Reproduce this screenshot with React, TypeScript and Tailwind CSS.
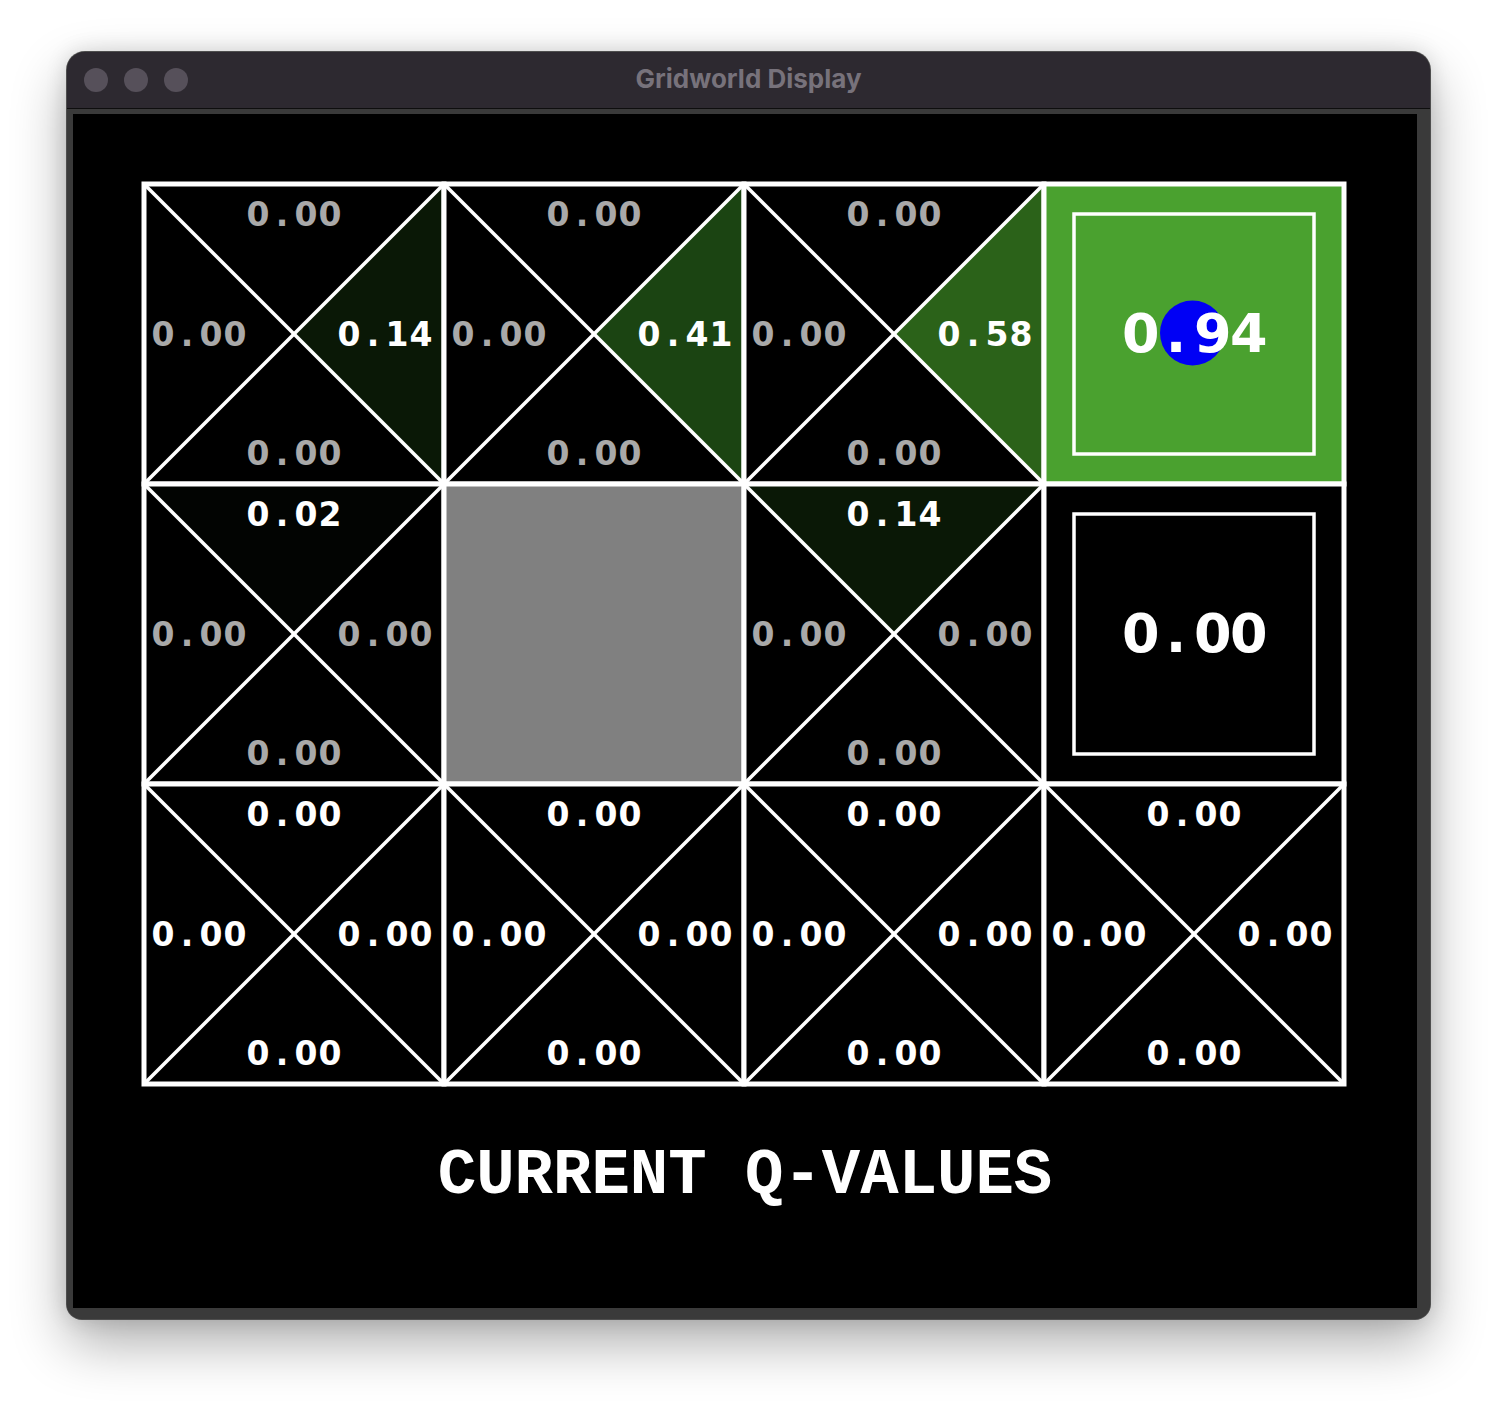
import React from "react";

type Dir = "n" | "e" | "s" | "w";

type QCell = {
  kind: "q";
  vals: Record<Dir, string>;
  fills: Partial<Record<Dir, string>>;
  best: Dir[];
};
type TermCell = { kind: "term"; val: string; bg: string; agent?: boolean };
type WallCell = { kind: "wall" };
type Cell = QCell | TermCell | WallCell;

const zero = { n: "0.00", e: "0.00", s: "0.00", w: "0.00" };

const cells: Cell[] = [
  { kind: "q", vals: { ...zero, e: "0.14" }, fills: { e: "#0a1806" }, best: ["e"] },
  { kind: "q", vals: { ...zero, e: "0.41" }, fills: { e: "#1b4412" }, best: ["e"] },
  { kind: "q", vals: { ...zero, e: "0.58" }, fills: { e: "#2b6219" }, best: ["e"] },
  { kind: "term", val: "0.94", bg: "#4aa12f", agent: true },
  { kind: "q", vals: { ...zero, n: "0.02" }, fills: { n: "#020402" }, best: ["n"] },
  { kind: "wall" },
  { kind: "q", vals: { ...zero, n: "0.14" }, fills: { n: "#0a1806" }, best: ["n"] },
  { kind: "term", val: "0.00", bg: "#000000" },
  { kind: "q", vals: zero, fills: {}, best: ["n", "e", "s", "w"] },
  { kind: "q", vals: zero, fills: {}, best: ["n", "e", "s", "w"] },
  { kind: "q", vals: zero, fills: {}, best: ["n", "e", "s", "w"] },
  { kind: "q", vals: zero, fills: {}, best: ["n", "e", "s", "w"] },
];

const tri: Record<Dir, string> = {
  n: "0,0 300,0 150,150",
  e: "300,0 300,300 150,150",
  s: "0,300 300,300 150,150",
  w: "0,0 0,300 150,150",
};

/* Fixed-pitch number: every character sits in a cell of equal width */
function Fixed({ text, cell, className }: { text: string; cell: string; className: string }) {
  return (
    <span className={`inline-flex ${className}`}>
      {text.split("").map((ch, i) => (
        <span key={i} className={`inline-block text-center ${cell}`}>
          {ch}
        </span>
      ))}
    </span>
  );
}

function Label({ text, white }: { text: string; white: boolean }) {
  return (
    <Fixed
      text={text}
      cell="w-[24px]"
      className={`font-['DejaVu_Sans',sans-serif] text-[33px] font-bold leading-none ${
        white ? "text-white" : "text-[#a9a9a9]"
      }`}
    />
  );
}

function CellView({ cell }: { cell: Cell }) {
  if (cell.kind === "wall") {
    return (
      <div className="relative h-[300px] w-[300px]">
        <svg className="absolute inset-0 overflow-visible" width="300" height="300" viewBox="0 0 300 300">
          <rect x="0" y="0" width="300" height="300" fill="#808080" />
          <rect x="0" y="0" width="300" height="300" fill="none" stroke="#ffffff" strokeWidth="5" />
        </svg>
      </div>
    );
  }
  if (cell.kind === "term") {
    return (
      <div className="relative h-[300px] w-[300px]">
        <svg className="absolute inset-0 overflow-visible" width="300" height="300" viewBox="0 0 300 300">
          <rect x="0" y="0" width="300" height="300" fill={cell.bg} />
          <rect x="30" y="30" width="240" height="240" fill="none" stroke="#ffffff" strokeWidth="3.5" />
          {cell.agent && <circle cx="148.5" cy="149" r="32.5" fill="#0000f5" />}
          <rect x="0" y="0" width="300" height="300" fill="none" stroke="#ffffff" strokeWidth="5" />
        </svg>
        <div className="relative flex h-full items-center justify-center">
          <Fixed
            text={cell.val}
            cell="w-[36px]"
            className="font-['DejaVu_Sans',sans-serif] text-[54px] font-bold leading-none text-white"
          />
        </div>
      </div>
    );
  }
  const isBest = (d: Dir) => cell.best.includes(d);
  return (
    <div className="relative h-[300px] w-[300px]">
      <svg className="absolute inset-0 overflow-visible" width="300" height="300" viewBox="0 0 300 300">
        <rect x="0" y="0" width="300" height="300" fill="#000000" />
        {(Object.keys(cell.fills) as Dir[]).map((d) => (
          <polygon key={d} points={tri[d]} fill={cell.fills[d]} />
        ))}
        <line x1="0" y1="0" x2="300" y2="300" stroke="#ffffff" strokeWidth="3.5" />
        <line x1="300" y1="0" x2="0" y2="300" stroke="#ffffff" strokeWidth="3.5" />
        <rect x="0" y="0" width="300" height="300" fill="none" stroke="#ffffff" strokeWidth="5" />
      </svg>
      <div className="relative flex h-full flex-col items-center justify-between pb-[14px] pt-[14px]">
        <Label text={cell.vals.n} white={isBest("n")} />
        <div className="flex w-full justify-between pl-[7px] pr-[11px]">
          <Label text={cell.vals.w} white={isBest("w")} />
          <Label text={cell.vals.e} white={isBest("e")} />
        </div>
        <Label text={cell.vals.s} white={isBest("s")} />
      </div>
    </div>
  );
}

export default function App() {
  return (
    <div className="min-h-[1404px] w-full bg-white pl-[67px] pt-[52px]">
      <div className="flex w-[1363px] flex-col overflow-hidden rounded-t-[18px] rounded-b-[15px] bg-[#363636] shadow-[0_0_0_1px_#4e4e4e,0_24px_55px_rgba(0,0,0,0.32),0_0_22px_rgba(0,0,0,0.14)]">
        {/* Title bar */}
        <div className="grid h-[56px] grid-cols-[1fr_auto_1fr] items-center bg-[#2d2930]">
          <div className="flex items-center gap-[16px] pl-[17px]">
            <span className="h-[24px] w-[24px] rounded-full bg-[#56505a]" />
            <span className="h-[24px] w-[24px] rounded-full bg-[#56505a]" />
            <span className="h-[24px] w-[24px] rounded-full bg-[#56505a]" />
          </div>
          <div className="pb-[3px] font-['Inter',sans-serif] text-[26px] font-bold text-[#77727b]">
            Gridworld Display
          </div>
          <div />
        </div>
        <div className="h-[1px] bg-[#0e0e0e]" />
        {/* Frame */}
        <div className="bg-[#3a3a3a] pb-[11px] pl-[6px] pr-[12px] pt-[5px]">
          <div className="flex h-[1194px] w-[1344px] flex-col bg-black pt-[70px]">
            <div className="ml-[71px] grid w-[1200px] grid-cols-[repeat(4,300px)] grid-rows-[repeat(3,300px)]">
              {cells.map((c, i) => (
                <CellView key={i} cell={c} />
              ))}
            </div>
            <div className="mt-[60px] text-center font-['Liberation_Mono',monospace] text-[64px] font-bold leading-none text-white">
              CURRENT Q-VALUES
            </div>
          </div>
        </div>
      </div>
    </div>
  );
}
